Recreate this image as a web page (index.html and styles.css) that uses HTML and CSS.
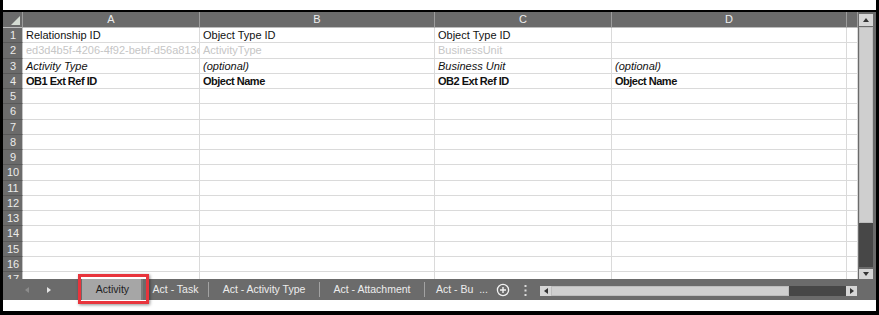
FILE: index.html
```html
<!DOCTYPE html>
<html lang="en">
<head>
  <meta charset="UTF-8" />
  <title>Relationship sheet</title>
  <link rel="stylesheet" href="styles.css">
</head>
<body>
  <div class="frame">
    <div class="gap-top"></div>
    <div class="window">
      <div class="main">
        <div class="grid">
          <div class="row head">
            <div class="corner"><span class="tri"></span></div>
            <div class="col">A</div>
            <div class="col">B</div>
            <div class="col">C</div>
            <div class="col">D</div>
            <div class="col"></div>
          </div>
          <div class="row">
            <div class="num">1</div>
            <div class="cell">Relationship ID</div>
            <div class="cell">Object Type ID</div>
            <div class="cell">Object Type ID</div>
            <div class="cell"></div>
            <div class="cell"></div>
          </div>
          <div class="row faint">
            <div class="num">2</div>
            <div class="cell">ed3d4b5f-4206-4f92-bebf-d56a813c</div>
            <div class="cell">ActivityType</div>
            <div class="cell">BusinessUnit</div>
            <div class="cell"></div>
            <div class="cell"></div>
          </div>
          <div class="row italic">
            <div class="num">3</div>
            <div class="cell">Activity Type</div>
            <div class="cell">(optional)</div>
            <div class="cell">Business Unit</div>
            <div class="cell">(optional)</div>
            <div class="cell"></div>
          </div>
          <div class="row bold">
            <div class="num">4</div>
            <div class="cell">OB1 Ext Ref ID</div>
            <div class="cell">Object Name</div>
            <div class="cell">OB2 Ext Ref ID</div>
            <div class="cell">Object Name</div>
            <div class="cell"></div>
          </div>
          <div class="row"><div class="num">5</div><div class="cell"></div><div class="cell"></div><div class="cell"></div><div class="cell"></div><div class="cell"></div></div>
          <div class="row"><div class="num">6</div><div class="cell"></div><div class="cell"></div><div class="cell"></div><div class="cell"></div><div class="cell"></div></div>
          <div class="row"><div class="num">7</div><div class="cell"></div><div class="cell"></div><div class="cell"></div><div class="cell"></div><div class="cell"></div></div>
          <div class="row"><div class="num">8</div><div class="cell"></div><div class="cell"></div><div class="cell"></div><div class="cell"></div><div class="cell"></div></div>
          <div class="row"><div class="num">9</div><div class="cell"></div><div class="cell"></div><div class="cell"></div><div class="cell"></div><div class="cell"></div></div>
          <div class="row"><div class="num">10</div><div class="cell"></div><div class="cell"></div><div class="cell"></div><div class="cell"></div><div class="cell"></div></div>
          <div class="row"><div class="num">11</div><div class="cell"></div><div class="cell"></div><div class="cell"></div><div class="cell"></div><div class="cell"></div></div>
          <div class="row"><div class="num">12</div><div class="cell"></div><div class="cell"></div><div class="cell"></div><div class="cell"></div><div class="cell"></div></div>
          <div class="row"><div class="num">13</div><div class="cell"></div><div class="cell"></div><div class="cell"></div><div class="cell"></div><div class="cell"></div></div>
          <div class="row"><div class="num">14</div><div class="cell"></div><div class="cell"></div><div class="cell"></div><div class="cell"></div><div class="cell"></div></div>
          <div class="row"><div class="num">15</div><div class="cell"></div><div class="cell"></div><div class="cell"></div><div class="cell"></div><div class="cell"></div></div>
          <div class="row"><div class="num">16</div><div class="cell"></div><div class="cell"></div><div class="cell"></div><div class="cell"></div><div class="cell"></div></div>
          <div class="row"><div class="num">17</div><div class="cell"></div><div class="cell"></div><div class="cell"></div><div class="cell"></div><div class="cell"></div></div>
        </div>

        <div class="vscroll">
          <div class="sbtn"><svg width="6" height="4" viewBox="0 0 6 4"><path d="M0 4 L3 0 L6 4 Z" fill="#333"/></svg></div>
          <div class="track"></div>
          <div class="thumb"></div>
          <div class="sbtn down"><svg width="6" height="4" viewBox="0 0 6 4"><path d="M0 0 L3 4 L6 0 Z" fill="#333"/></svg></div>
        </div>
      </div>

      <div class="tabbar">
        <div class="nav">
          <svg class="arrow" width="4" height="6" viewBox="0 0 4 6"><path d="M4 0 L0 3 L4 6 Z" fill="#8c8c8c"/></svg>
          <svg class="arrow" width="4" height="6" viewBox="0 0 4 6"><path d="M0 0 L4 3 L0 6 Z" fill="#e6e6e6"/></svg>
        </div>
        <div class="tab active">Activity</div>
        <div class="tab t2">Act - Task</div>
        <div class="sep"></div>
        <div class="tab t3">Act - Activity Type</div>
        <div class="sep"></div>
        <div class="tab t4">Act - Attachment</div>
        <div class="sep"></div>
        <div class="tab t5">Act - Bu&nbsp; ...</div>
        <div class="add">
          <svg width="14" height="14" viewBox="0 0 14 14">
            <circle cx="7" cy="7" r="5.6" fill="none" stroke="#f2f2f2" stroke-width="1.3"/>
            <path d="M7 4 V10 M4 7 H10" stroke="#f2f2f2" stroke-width="1.4"/>
          </svg>
        </div>
        <div class="more">
          <svg width="3" height="11" viewBox="0 0 3 11">
            <rect x="0.5" y="0" width="2" height="2" fill="#dcdcdc"/>
            <rect x="0.5" y="4.5" width="2" height="2" fill="#dcdcdc"/>
            <rect x="0.5" y="9" width="2" height="2" fill="#dcdcdc"/>
          </svg>
        </div>
        <div class="hscroll">
          <div class="hbtn"><svg width="4" height="6" viewBox="0 0 4 6"><path d="M4 0 L0 3 L4 6 Z" fill="#333"/></svg></div>
          <div class="htrack"></div>
          <div class="hthumb"></div>
          <div class="hbtn"><svg width="4" height="6" viewBox="0 0 4 6"><path d="M0 0 L4 3 L0 6 Z" fill="#333"/></svg></div>
        </div>
      </div>
    </div>
    <div class="gap-bottom"></div>
  </div>
</body>
</html>
```

FILE: styles.css
```css
body {
  margin: 0;
  background: #000;
  font-family: "Liberation Sans", Arial, sans-serif;
}
.frame {
  width: 879px;
  height: 315px;
  box-sizing: border-box;
  padding: 0 3px 4px 3px;
  display: flex;
  flex-direction: column;
}
.gap-top {
  height: 10px;
  background: #fff;
}
.gap-bottom {
  height: 11px;
  background: #fff;
}
.window {
  margin-top: 2px;
  height: 288px;
  display: flex;
  flex-direction: column;
  background: #6b6b6b;
}
.main {
  display: flex;
  height: 267px;
}
.grid {
  width: 855px;
  overflow: hidden;
  background: #fff;
}
.row {
  display: grid;
  grid-template-columns: 20px 177px 235px 177px 235px 11px;
  height: 15.25px;
  font-size: 11px;
  line-height: 14px;
  color: #111;
}
.row.head {
  height: 16px;
}
.cell {
  box-sizing: border-box;
  border-right: 1px solid #dadada;
  border-bottom: 1px solid #dadada;
  padding: 0 3px;
  white-space: nowrap;
  overflow: hidden;
}
.num {
  box-sizing: border-box;
  background: #6b6b6b;
  color: #ececec;
  text-align: center;
  border-bottom: 1px solid #585858;
  border-right: 1px solid #c4c4c4;
  padding-left: 1px;
}
.col {
  box-sizing: border-box;
  background: #6b6b6b;
  color: #eeeeee;
  text-align: center;
  line-height: 15px;
  border-right: 1px solid #9c9c9c;
  border-bottom: 1px solid #bdbdbd;
}
.corner {
  box-sizing: border-box;
  background: #6b6b6b;
  border-right: 1px solid #9c9c9c;
  border-bottom: 1px solid #bdbdbd;
  display: flex;
  justify-content: flex-end;
  align-items: flex-end;
  padding: 0 2px 2px 0;
}
.tri {
  width: 0;
  height: 0;
  border-left: 9px solid transparent;
  border-bottom: 9px solid #d5dcd3;
}
.faint .cell {
  color: #c6c6c6;
}
.italic .cell {
  font-style: italic;
}
.bold .cell {
  font-weight: bold;
  letter-spacing: -0.5px;
}

.vscroll {
  width: 18px;
  box-sizing: border-box;
  padding: 2px 3px 0 1px;
  display: flex;
  flex-direction: column;
  background: #6b6b6b;
}
.sbtn {
  height: 12px;
  margin-bottom: 1px;
  background: #d6d6d6;
  display: flex;
  align-items: center;
  justify-content: center;
}
.sbtn.down {
  height: 10px;
  margin: 2px 0 0 0;
}
.track {
  height: 196px;
  box-sizing: border-box;
  background: #cfcfcf;
  border: 1px solid #bdbdbd;
}
.thumb {
  height: 44px;
  background: #474747;
}

.tabbar {
  height: 21px;
  display: flex;
  align-items: center;
  font-size: 10.5px;
  color: #ededed;
}
.nav {
  width: 75px;
  display: flex;
  align-items: center;
  gap: 18px;
  padding-left: 22px;
  box-sizing: border-box;
}
.tab {
  height: 21px;
  line-height: 21px;
  text-align: center;
  white-space: nowrap;
}
.tab.active {
  position: relative;
  width: 61px;
  margin-left: 4px;
  background: #a6a6a6;
  color: #1e1e1e;
  box-shadow: inset -2px 0 0 #7c7c7c;
}
.tab.active::after {
  content: "";
  position: absolute;
  top: -5px;
  bottom: -4px;
  left: -4px;
  right: -6px;
  border: 3px solid #e8343c;
  box-shadow: 1px 1px 3px rgba(0, 0, 0, 0.45);
}
.t2 { width: 65px; }
.t3 { width: 110px; }
.t4 { width: 104px; }
.t5 {
  width: 71px;
  text-align: left;
  padding-left: 11px;
  box-sizing: border-box;
}
.sep {
  width: 1px;
  height: 15px;
  background: #a2a2a2;
}
.add {
  width: 14px;
  display: flex;
  align-items: center;
  margin-top: 1px;
}
.more {
  width: 30px;
  display: flex;
  justify-content: center;
  margin-top: 1px;
}
.hscroll {
  width: 317px;
  height: 10px;
  margin-top: 3px;
  display: flex;
}
.hbtn {
  width: 11px;
  background: #d6d6d6;
  display: flex;
  align-items: center;
  justify-content: center;
}
.htrack {
  width: 238px;
  box-sizing: border-box;
  background: #cfcfcf;
  border: 1px solid #bdbdbd;
}
.hthumb {
  width: 57px;
  background: #474747;
}
```
